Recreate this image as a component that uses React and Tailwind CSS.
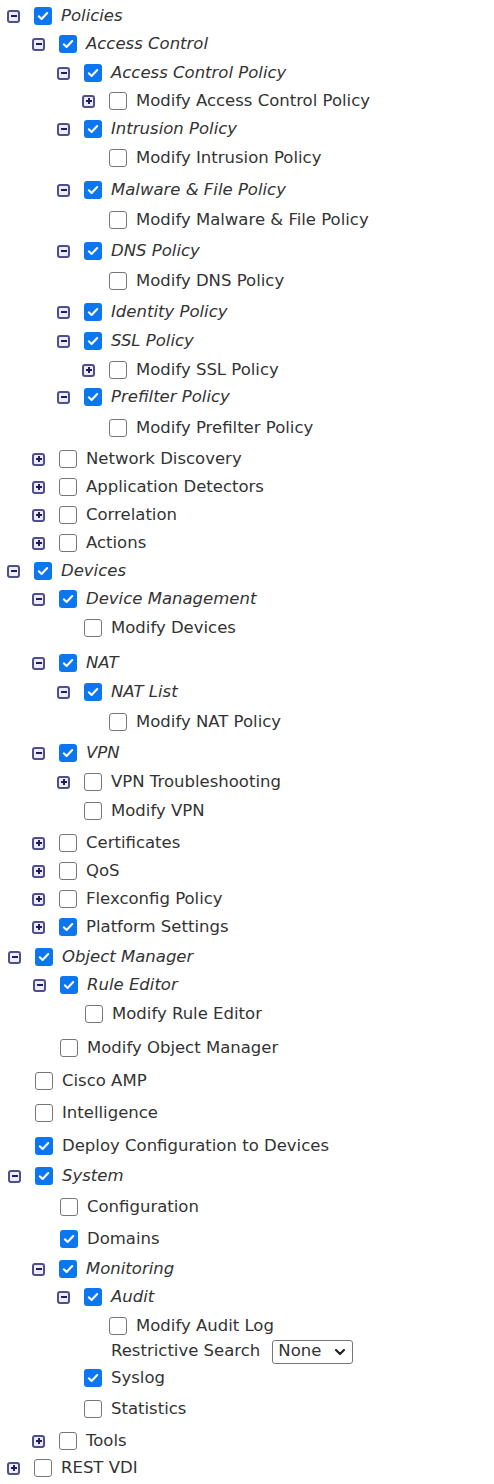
import React from 'react';

const PAD = ['pl-0', 'pl-[25px]', 'pl-[50px]', 'pl-[75px]'];

// [depth, toggle, checked, italic, label, margin-top]
const ROWS = [
  [0, '-', true, true, 'Policies', 'mt-0'],
  [1, '-', true, true, 'Access Control', 'mt-0'],
  [2, '-', true, true, 'Access Control Policy', 'mt-[1px]'],
  [3, '+', false, false, 'Modify Access Control Policy', 'mt-0'],
  [2, '-', true, true, 'Intrusion Policy', 'mt-0'],
  [3, null, false, false, 'Modify Intrusion Policy', 'mt-[1px]'],
  [2, '-', true, true, 'Malware & File Policy', 'mt-[4px]'],
  [3, null, false, false, 'Modify Malware & File Policy', 'mt-[2px]'],
  [2, '-', true, true, 'DNS Policy', 'mt-[3px]'],
  [3, null, false, false, 'Modify DNS Policy', 'mt-[2px]'],
  [2, '-', true, true, 'Identity Policy', 'mt-[3px]'],
  [2, '-', true, true, 'SSL Policy', 'mt-[1px]'],
  [3, '+', false, false, 'Modify SSL Policy', 'mt-[1px]'],
  [2, '-', true, true, 'Prefilter Policy', '-mt-px'],
  [3, null, false, false, 'Modify Prefilter Policy', 'mt-[3px]'],
  [1, '+', false, false, 'Network Discovery', 'mt-[3px]'],
  [1, '+', false, false, 'Application Detectors', 'mt-0'],
  [1, '+', false, false, 'Correlation', 'mt-0'],
  [1, '+', false, false, 'Actions', 'mt-0'],
  [0, '-', true, true, 'Devices', 'mt-0'],
  [1, '-', true, true, 'Device Management', 'mt-0'],
  [2, null, false, false, 'Modify Devices', 'mt-[1px]'],
  [1, '-', true, true, 'NAT', 'mt-[7px]'],
  [2, '-', true, true, 'NAT List', 'mt-[1px]'],
  [3, null, false, false, 'Modify NAT Policy', 'mt-[2px]'],
  [1, '-', true, true, 'VPN', 'mt-[3px]'],
  [2, '+', false, false, 'VPN Troubleshooting', 'mt-[1px]'],
  [2, null, false, false, 'Modify VPN', 'mt-[1px]'],
  [1, '+', false, false, 'Certificates', 'mt-[4px]'],
  [1, '+', false, false, 'QoS', 'mt-0'],
  [1, '+', false, false, 'Flexconfig Policy', 'mt-0'],
  [1, '+', true, false, 'Platform Settings', 'mt-0'],
];

const ROWS2 = [
  [0, '-', true, true, 'Object Manager', 'mt-[2px]'],
  [1, '-', true, true, 'Rule Editor', 'mt-0'],
  [2, null, false, false, 'Modify Rule Editor', 'mt-[1px]'],
  [1, null, false, false, 'Modify Object Manager', 'mt-[6px]'],
  [0, null, false, false, 'Cisco AMP', 'mt-[5px]'],
  [0, null, false, false, 'Intelligence', 'mt-[4px]'],
  [0, null, true, false, 'Deploy Configuration to Devices', 'mt-[5px]'],
  [0, '-', true, true, 'System', 'mt-[2px]'],
  [1, null, false, false, 'Configuration', 'mt-[3px]'],
  [1, null, true, false, 'Domains', 'mt-[4px]'],
];

const ROWS3 = [
  [1, '-', true, true, 'Monitoring', 'mt-[2px]'],
  [2, '-', true, true, 'Audit', 'mt-0'],
  [3, null, false, false, 'Modify Audit Log', 'mt-[1px]'],
];

const ROWS4 = [
  [2, null, true, false, 'Syslog', 'mt-0'],
  [2, null, false, false, 'Statistics', 'mt-[3px]'],
  [1, '+', false, false, 'Tools', 'mt-[4px]'],
  [0, '+', false, false, 'REST VDI', '-mt-px'],
];

function Toggle({ kind }) {
  return (
    <span className="relative flex items-center justify-center w-[13px] h-[13px] border-2 border-[#4f4f8c] rounded-[3px] bg-[#ecebf7]">
      <span className="absolute w-[6px] h-[2px] bg-[#1e1e5a]"></span>
      {kind === '+' && <span className="absolute w-[2px] h-[6px] bg-[#1e1e5a]"></span>}
    </span>
  );
}

function Box({ checked }) {
  if (checked) {
    return (
      <span className="flex items-center justify-center w-[18px] h-[18px] rounded-[3px] bg-[#0b76f0]">
        <svg viewBox="0 0 16 16" className="w-[14px] h-[14px]" fill="none">
          <path d="M3.2 8.4 6.4 11.4 12.8 4.6" stroke="white" strokeWidth="2.4" strokeLinecap="round" strokeLinejoin="round" />
        </svg>
      </span>
    );
  }
  return <span className="block w-[18px] h-[18px] rounded-[3px] border-[1.5px] border-[#767676] bg-white"></span>;
}

function Row({ row }) {
  const [depth, toggle, checked, italic, label, mt] = row;
  return (
    <div className={`flex items-center h-[28px] ${PAD[depth]} ${mt}`}>
      <span className="flex items-center w-[34px] pl-[7px]">{toggle && <Toggle kind={toggle} />}</span>
      <Box checked={checked} />
      <span className={`ml-[9px] whitespace-nowrap ${italic ? 'italic' : ''}`}>{label}</span>
    </div>
  );
}

export default function App() {
  return (
    <div
      className="w-[494px] h-[1484px] bg-white pt-[2px] text-[16.5px] text-[#333333] overflow-hidden"
      style={{ fontFamily: '"DejaVu Sans", Verdana, sans-serif' }}
    >
      {ROWS.map((r) => (
        <Row key={r[4]} row={r} />
      ))}
      <div className="border-l border-[#e2e2e2] -ml-px pl-px">
        {ROWS2.map((r) => (
          <Row key={r[4]} row={r} />
        ))}
      </div>
      {ROWS3.map((r) => (
        <Row key={r[4]} row={r} />
      ))}
      <div className="flex items-center h-[25px] -mt-px pl-[111px]">
        <span className="whitespace-nowrap">Restrictive Search</span>
        <span className="ml-[12px] flex items-center justify-between w-[81px] h-[24px] border border-[#767676] rounded-[3px] pl-[5px] pr-[6px] bg-white">
          <span>None</span>
          <svg viewBox="0 0 12 12" className="w-[12px] h-[12px]" fill="none">
            <path d="M2 4 6 8 10 4" stroke="#222" strokeWidth="2.2" strokeLinecap="round" strokeLinejoin="round" />
          </svg>
        </span>
      </div>
      {ROWS4.map((r) => (
        <Row key={r[4]} row={r} />
      ))}
    </div>
  );
}
